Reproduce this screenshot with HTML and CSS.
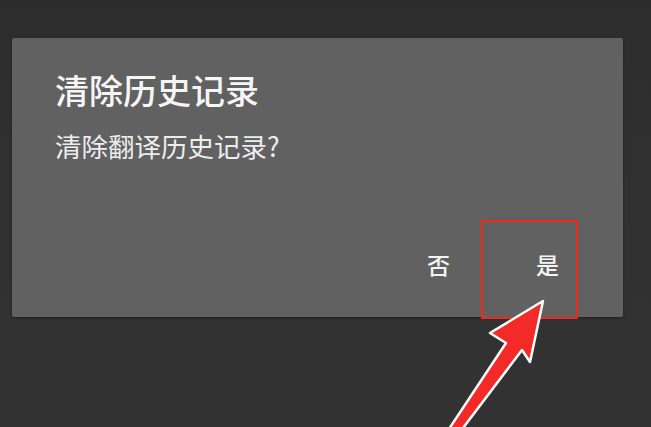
FILE: index.html
```html
<!DOCTYPE html>
<html lang="zh-CN">
<head>
<meta charset="utf-8">
<title>清除历史记录</title>
<link rel="stylesheet" href="styles.css">
</head>
<body>
<div class="screen">
  <div class="dialog">
    <div class="dialog-title">清除历史记录</div>
    <div class="dialog-message">清除翻译历史记录?</div>
    <div class="dialog-actions">
      <span class="action action-no">否</span>
      <span class="action action-yes">是</span>
    </div>
  </div>
  <div class="highlight"></div>
  <svg class="arrow" viewBox="0 0 651 427" width="651" height="427" aria-hidden="true">
    <polygon points="543,301 530,362 522,350 460,432 447,432 506,343 490,333" fill="#f42a28" stroke="#ffffff" stroke-width="2.5" stroke-linejoin="round"/>
  </svg>
</div>
</body>
</html>
```

FILE: styles.css
```css
html, body {
  margin: 0;
  padding: 0;
  background: #313131;
}

.screen {
  position: relative;
  width: 651px;
  height: 427px;
  overflow: hidden;
  background: linear-gradient(#2c2c2c 0, #2e2e2e 38px, #323232 320px, #323232 100%);
  font-family: "Noto Sans CJK SC", "Noto Sans", sans-serif;
  color: #f2f2f2;
}

.dialog {
  box-sizing: border-box;
  margin: 0 0 0 12px;
  position: relative;
  top: 38px;
  width: 611px;
  height: 279px;
  background: #616161;
  border-radius: 2px;
  box-shadow: 0 1px 3px rgba(0, 0, 0, 0.35);
  padding: 35px 0 41px 43px;
  display: flex;
  flex-direction: column;
}

.dialog-title {
  font-size: 34px;
  line-height: 34px;
  font-weight: 500;
  color: #f6f6f6;
}

.dialog-message {
  margin-top: 25px;
  font-size: 26.5px;
  line-height: 27px;
  color: #ededed;
}

.dialog-actions {
  margin-top: auto;
  display: flex;
  justify-content: flex-end;
  gap: 86px;
  padding-right: 64px;
}

.action {
  font-size: 23px;
  line-height: 23px;
  font-weight: 500;
  color: #f4f4f4;
}

.highlight {
  position: absolute;
  left: 481px;
  top: 220px;
  width: 93px;
  height: 95px;
  border: 2px solid #f3281c;
}

.arrow {
  position: absolute;
  left: 0;
  top: 0;
}
```
